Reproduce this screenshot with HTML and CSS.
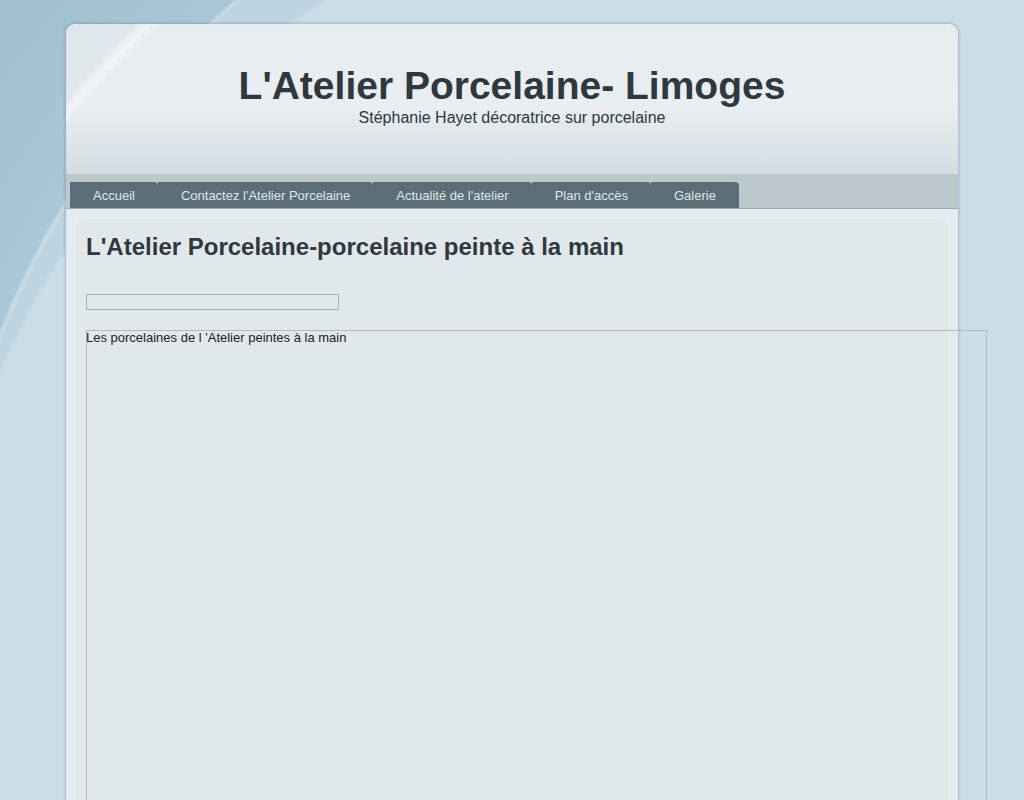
FILE: index.html
```html
<!DOCTYPE html>
<html lang="fr">
<head>
<meta charset="utf-8">
<title>L'Atelier Porcelaine- Limoges</title>
<link rel="stylesheet" href="styles.css">
</head>
<body>
<div class="page">
  <header class="header">
    <h1 class="site-title">L'Atelier Porcelaine- Limoges</h1>
    <p class="site-sub">Stéphanie Hayet décoratrice sur porcelaine</p>
  </header>
  <nav class="nav">
    <a class="tab" href="#">Accueil</a>
    <a class="tab" href="#">Contactez l'Atelier Porcelaine</a>
    <a class="tab" href="#">Actualité de l'atelier</a>
    <a class="tab" href="#">Plan d'accès</a>
    <a class="tab" href="#">Galerie</a>
  </nav>
  <main class="content">
    <div class="panel">
      <h2 class="page-title">L'Atelier Porcelaine-porcelaine peinte à la main</h2>
      <div class="field"></div>
      <div class="frame"><span class="frame-text">Les porcelaines de l 'Atelier peintes à la main</span></div>
    </div>
  </main>
</div>
</body>
</html>
```
FILE: styles.css
```css
html {
  background-color: #cbdde6;
}
body {
  margin: 0;
  padding-top: 24px;
  font-family: "Liberation Sans", Arial, sans-serif;
  color: #2a2f32;
  min-height: 800px;
  background:
    radial-gradient(circle at 735px 688px, #cbdde6 798px, rgba(203,221,230,0) 802px),
    radial-gradient(circle at 800px 650px, #bdd5e0 856px, #c9dde6 859px, #a9c7d6 863px, #a0c0d1 1000px, #a0c0d1 1400px);
  background-repeat: no-repeat;
  overflow: hidden;
}
.page {
  width: 892px;
  margin: 0 auto;
  border-radius: 9px 9px 0 0;
  box-shadow: 0 0 3px 1px rgba(80, 110, 130, 0.35);
  background: #e4ecf0;
}
.header {
  height: 150px;
  box-sizing: border-box;
  padding-top: 39px;
  text-align: center;
  border-radius: 9px 9px 0 0;
  background:
    radial-gradient(circle at 700px 650px, rgba(255,255,255,0) 888px, rgba(255,255,255,0.45) 896px, rgba(160,185,200,0.12) 906px),
    linear-gradient(#e6edf0 0%, #e8eef1 55%, #e0e7eb 75%, #d5dde2 100%);
}
.site-title {
  margin: 0;
  font-size: 39px;
  line-height: 46px;
  font-weight: bold;
  color: #2e383d;
}
.site-sub {
  margin: 0;
  font-size: 16px;
  line-height: 18px;
  color: #2e383d;
}
.nav {
  display: flex;
  align-items: flex-end;
  height: 34px;
  padding-left: 4px;
  background: #bdc8cc;
  border-bottom: 1px solid #9eacb2;
}
.tab {
  display: block;
  height: 26px;
  box-sizing: border-box;
  padding: 1px 23px 0;
  line-height: 26px;
  font-size: 13px;
  color: #dfe7eb;
  text-decoration: none;
  background: #5b6e75;
  border-top-right-radius: 4px;
}
.content {
  padding: 10px 10px 0;
  background: #e4ecf0;
}
.panel {
  background: #e0e8eb;
  border-radius: 8px 8px 0 0;
  padding: 14px 10px 40px;
  min-height: 560px;
}
.page-title {
  margin: 0;
  font-size: 24px;
  line-height: 28px;
  font-weight: bold;
  color: #2e383d;
}
.field {
  margin-top: 33px;
  width: 253px;
  height: 16px;
  box-sizing: border-box;
  border: 1px solid #a9b0b3;
}
.frame {
  margin-top: 20px;
  width: 901px;
  height: 520px;
  box-sizing: border-box;
  border: 1px solid #b3b9bc;
  font-size: 13px;
  line-height: 13px;
  color: #222;
}
.frame-text {
  display: block;
  margin-left: -1px;
}
```
